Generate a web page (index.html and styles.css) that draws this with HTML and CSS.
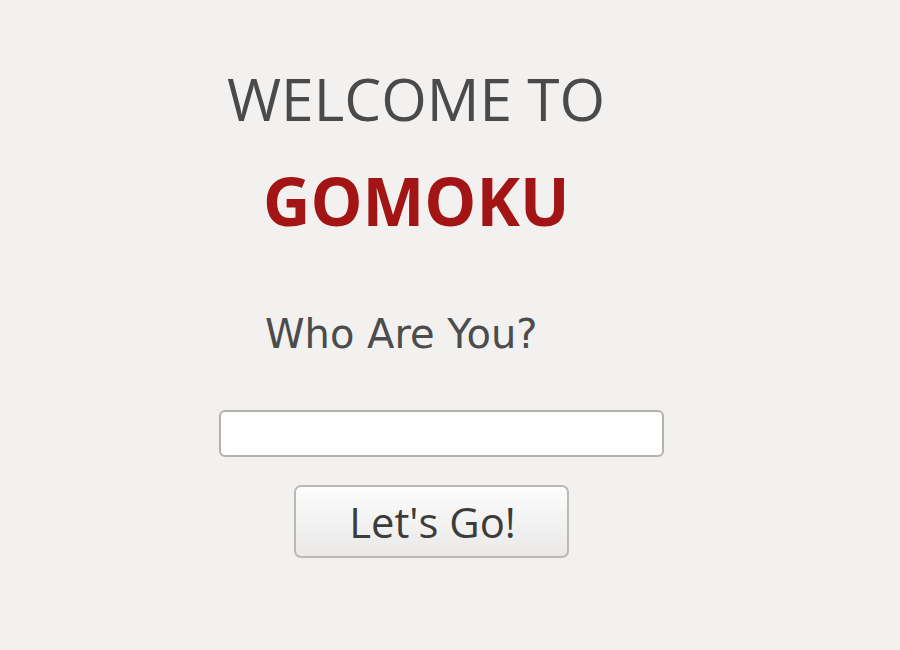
FILE: index.html
```html
<!DOCTYPE html>
<html>
<head>
<meta charset="utf-8">
<link rel="stylesheet" href="styles.css">
</head>
<body>
<main class="app">
  <h1 class="welcome">WELCOME TO</h1>
  <h2 class="title">GOMOKU</h2>
  <p class="prompt">Who Are You?</p>
  <input class="name" type="text">
  <button class="go">Let's Go!</button>
</main>
</body>
</html>
```
FILE: styles.css
```css
html, body {
  margin: 0;
  padding: 0;
  background: #f2f1f0;
  width: 900px;
  height: 650px;
  overflow: hidden;
}
.app {
  display: flex;
  flex-direction: column;
  align-items: flex-start;
  padding-top: 62px;
}
.welcome {
  margin: 0 0 0 227px;
  font-family: "Open Sans", sans-serif;
  font-weight: 400;
  font-size: 58.6px;
  line-height: 72px;
  color: #4a4a4a;
}
.title {
  margin: 31px 0 0 263px;
  font-family: "Open Sans", sans-serif;
  font-weight: 700;
  font-size: 65.5px;
  line-height: 72px;
  color: #a31414;
}
.prompt {
  margin: 72px 0 0 265px;
  font-family: "DejaVu Sans", sans-serif;
  font-size: 40px;
  line-height: 50px;
  color: #4c4c4c;
}
.name {
  margin: 51px 0 0 219px;
  box-sizing: border-box;
  width: 445px;
  height: 47px;
  border: 2px solid #b5b2ae;
  border-radius: 6px;
  background: #fff;
  padding: 0 10px;
}
.go {
  margin: 28px 0 0 294px;
  box-sizing: border-box;
  width: 275px;
  height: 73px;
  border: 2px solid #bcb8b4;
  border-radius: 7px;
  background: linear-gradient(#fcfcfc, #eae9e8);
  font-family: "Open Sans", sans-serif;
  font-size: 41.8px;
  color: #3c3c3c;
  padding: 0 0 0 2px;
}
```
